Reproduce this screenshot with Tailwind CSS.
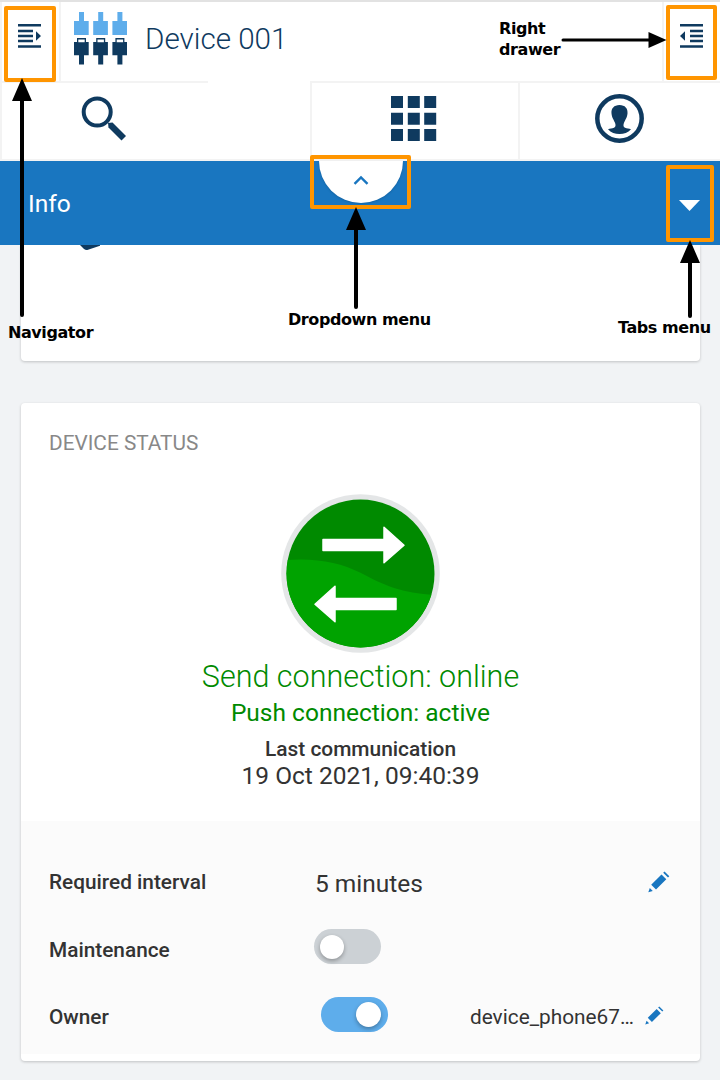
<!DOCTYPE html>
<html lang="en">
<head>
<meta charset="utf-8">
<title>Device 001</title>
<script src="https://cdn.jsdelivr.net/npm/@tailwindcss/browser@4"></script>
</head>
<body class="relative flex h-[1080px] w-[720px] flex-col overflow-hidden bg-[#f1f3f5] font-[Roboto,sans-serif] text-[#333]">
  <header class="flex h-[161px] shrink-0 flex-col border-t-2 border-[#e2e2e2] bg-white">
    <div class="flex h-[79px]">
      <button class="flex w-[61px] border-x-2 border-[#f3f3f3] pt-[22px] pl-4" aria-label="Navigator">
        <svg width="24" height="25" viewBox="0 0 24 25" fill="#0f3a5f"><path d="M0 0h23v2.600H0zM0 5.800h15v2.400H0zM0 10.800h15v2.400H0zM0 15.800h15v2.400H0zM0 21.200h23v2.600H0zM18 7.200l5 4.800-5 4.800z"/></svg>
      </button>
      <div class="flex flex-1 gap-[18px] pt-[10px] pl-[13px]">
        <svg width="53" height="53" viewBox="0 0 53 53">
          <g id="plug"><path fill="#5eadeb" d="M5 0h5v9h4.700v14H0V9h5z"/><path fill="#0f3a5f" fill-rule="evenodd" d="M3 26h9v4h2.700v13.300H10v9.200H5v-9.200H0V30h3zM4.300 27.600v2.600h6.400v-2.600z"/></g>
          <use href="#plug" x="19.200"/><use href="#plug" x="38.400"/>
        </svg>
        <h1 class="pt-[8.5px] text-[29.6px] leading-9 font-light whitespace-nowrap text-[#0f3a5f]">Device 001</h1>
      </div>
      <button class="flex w-[58px] border-l-2 border-[#f3f3f3] pt-[22px] pl-4" aria-label="Right drawer">
        <svg width="24" height="25" viewBox="0 0 24 25" fill="#0f3a5f"><path d="M0 0h23v2.600H0zM10 5.800h13v2.400H10zM10 10.800h13v2.400H10zM10 15.800h13v2.400H10zM0 21.200h23v2.600H0zM5 7.200L0 12l5 4.800z"/></svg>
      </button>
    </div>
    <nav class="flex h-20 border-b-2 border-[#f3f3f3]">
      <button class="flex w-[208px] justify-center border-t-2 border-l-2 border-[#f3f3f3] pt-[13px] pr-[3px]" aria-label="Search">
        <svg width="46" height="46" viewBox="0 0 46 46"><circle cx="16.200" cy="16" r="13.500" fill="none" stroke="#0f3a5f" stroke-width="4"/><path fill="#0f3a5f" d="M27 27l4.500-.5L45 40 40.500 44.500 27.500 31.500z"/></svg>
      </button>
      <div class="w-[102px]"></div>
      <button class="flex w-[208px] justify-center border-t-2 border-l-2 border-[#f3f3f3] pt-[13px] pr-[2px]" aria-label="Apps">
        <svg width="46" height="46" viewBox="0 0 46 46" fill="#0f3a5f"><path d="M0 0h12v12H0zM16.800 0h12v12h-12zM33.200 0h12v12h-12zM0 16.800h12v12H0zM16.800 16.800h12v12h-12zM33.200 16.800h12v12h-12zM0 33h12v12H0zM16.800 33h12v12h-12zM33.200 33h12v12h-12z"/></svg>
      </button>
      <button class="flex w-[202px] justify-center border-t-2 border-l-2 border-[#f3f3f3] pt-[11px] pr-px" aria-label="Profile">
        <svg width="49" height="49" viewBox="0 0 49 49"><circle cx="24.500" cy="24.500" r="22.200" fill="none" stroke="#0f3a5f" stroke-width="4.500"/><path fill="#0f3a5f" d="M24.500 11c-5.500 0-8.500 3.500-8 8.500.4 4.500 2.500 6.500 3.600 9.500.8 2.500.6 4-1.100 4.800-2 .8-3.800.8-6 1.400 3 3.300 7 4.800 11.500 4.800s8.500-1.500 11.500-4.800c-2.200-.6-4-.6-6-1.400-1.700-.8-1.900-2.300-1.100-4.800 1.100-3 3.200-5 3.600-9.500.5-5-2.500-8.500-8-8.500z"/></svg>
      </button>
    </nav>
  </header>

  <section class="relative flex h-[84px] shrink-0 items-center justify-between bg-[#1976c0] pr-5 pl-7">
    <h2 class="pt-[2px] text-[24.5px] text-white">Info</h2>
    <div class="absolute top-0 left-[319px] flex h-[42px] w-[84px] justify-center rounded-b-full bg-white pt-[14px] shadow-sm">
      <svg width="16" height="11" viewBox="0 0 16 11" fill="none" stroke="#1976c0" stroke-width="2.400"><path d="M1.500 8.800L8 2.500l6.500 6.300"/></svg>
    </div>
    <svg class="mt-1" width="21" height="11" viewBox="0 0 21 11"><path fill="white" d="M0 0h21L10.500 11z"/></svg>
  </section>

  <main class="flex flex-col gap-[42px] px-5 pl-[21px]">
    <section class="h-[116px] rounded-b bg-white pl-[59px] shadow-[0_1px_3px_rgba(0,0,0,0.2)]">
      <svg width="20" height="6" viewBox="0 0 20 6"><path fill="#0f3a5f" d="M0 0h20v.7L8 4.700q-2 .7-4-.7z"/></svg>
    </section>

    <section class="flex h-[658px] flex-col rounded bg-white shadow-[0_1px_3px_rgba(0,0,0,0.2)]">
      <div class="flex h-[418px] flex-col items-center">
        <h3 class="self-start pt-7 pl-7 text-[20.8px] leading-6 text-[#888]">DEVICE STATUS</h3>
        <svg class="mt-[38px] mr-px shrink-0" width="160" height="160" viewBox="0 0 160 160">
          <defs><clipPath id="disc"><circle cx="80.500" cy="80.500" r="74"/></clipPath></defs>
          <circle cx="80.500" cy="80.500" r="79.300" fill="#e4e6e7"/>
          <circle cx="80.500" cy="80.500" r="74" fill="#008a00"/>
          <path clip-path="url(#disc)" fill="#00a300" d="M0 67.500C34 64 59 69 80 79.500c24 13 42 20.500 75 22.500v58H0z"/>
          <g fill="white" stroke="white" stroke-width="1.500" stroke-linejoin="round"><path d="M43 46.500h61V34.200l20 18.100-20 17.500V57.500H43z"/><path d="M116 105.500H55V93.200l-20 18.100 20 17.500v-12.300h61z"/></g>
        </svg>
        <p class="mt-1 text-[30.5px] leading-10 font-light whitespace-nowrap text-[#008a00]">Send connection: online</p>
        <p class="text-[24.5px] leading-8 text-[#008a00]">Push connection: active</p>
        <p class="mt-2 text-[20.9px] leading-6 font-medium">Last communication</p>
        <p class="-mt-px text-[24.5px] leading-8">19 Oct 2021, 09:40:39</p>
      </div>
      <div class="flex h-[233px] flex-col bg-[#fbfbfb] px-7 pt-[27px]">
        <div class="flex h-[68px] items-center">
          <span class="w-[266px] pt-[2px] text-[20.8px] font-medium">Required interval</span>
          <span class="flex-1 pt-1 text-[24.5px]">5 minutes</span>
          <svg class="mr-[2px]" width="22" height="22" viewBox="0 0 22 22" fill="#1976c0"><path d="M16.500.500l4.800 4.800-1.300 1.200-4.800-4.800zM13.500 3.500l4.800 4.800L8 18.500l-4.800-4.800zM1.800 17l3 3L.3 21.300z"/></svg>
        </div>
        <div class="flex h-[67px] items-center">
          <span class="w-[265px] pt-[2px] text-[20.8px] font-medium">Maintenance</span>
          <div class="-mt-[6px] flex h-[35px] w-[67px] items-center rounded-full bg-[#ccd1d5] pl-[6px]"><div class="size-6 rounded-full bg-white shadow-[0_2px_4px_rgba(0,0,0,0.3)]"></div></div>
        </div>
        <div class="flex h-[67px] items-center">
          <span class="w-[272px] pt-[2px] text-[20.8px] font-medium">Owner</span>
          <div class="-mt-1 flex h-[35px] w-[67px] items-center justify-end rounded-full bg-[#5eadeb] pr-[7px]"><div class="size-[25px] rounded-full bg-white shadow-[0_2px_4px_rgba(0,0,0,0.3)]"></div></div>
          <span class="ml-[82px] flex-1 pt-[2px] text-[20.8px] whitespace-nowrap">device_phone67…</span>
          <svg class="mr-2 -mt-[3px]" width="19" height="19" viewBox="0 0 22 22" fill="#1976c0"><path d="M16.500.500l4.800 4.800-1.300 1.200-4.800-4.800zM13.500 3.500l4.800 4.800L8 18.500l-4.800-4.800zM1.800 17l3 3L.3 21.300z"/></svg>
        </div>
      </div>
    </section>
  </main>

  <!-- Callouts -->
  <svg class="absolute top-0 left-0" width="720" height="1080" viewBox="0 0 720 1080">
    <g fill="none" stroke="#ff9500" stroke-width="4" stroke-linejoin="round">
      <path d="M6 8h48v72H6zM668 7h47v71h-47zM312 157h97v50h-97zM668 167h44v73h-44z"/>
    </g>
    <g stroke="black" stroke-width="4" stroke-linecap="round">
      <path d="M22 98v217M356 228v79M690 260v56"/><path stroke-width="3" d="M563 40h90"/>
    </g>
    <path d="M12 101L22 78l10 23zM346 230l10-23 10 23zM680 263l10-23 10 23zM648.500 32l18 8-18 8z"/>
  </svg>
  <div class="font-['DejaVu_Sans','sans-serif'] text-base leading-[21px] font-bold tracking-[-0.42px] whitespace-nowrap text-black">
    <span class="absolute top-[18px] left-[499px]">Right<br>drawer</span>
    <span class="absolute top-[322px] left-2">Navigator</span>
    <span class="absolute top-[309px] left-[288px]">Dropdown menu</span>
    <span class="absolute top-[317px] left-[618px]">Tabs menu</span>
  </div>
</body>
</html>
